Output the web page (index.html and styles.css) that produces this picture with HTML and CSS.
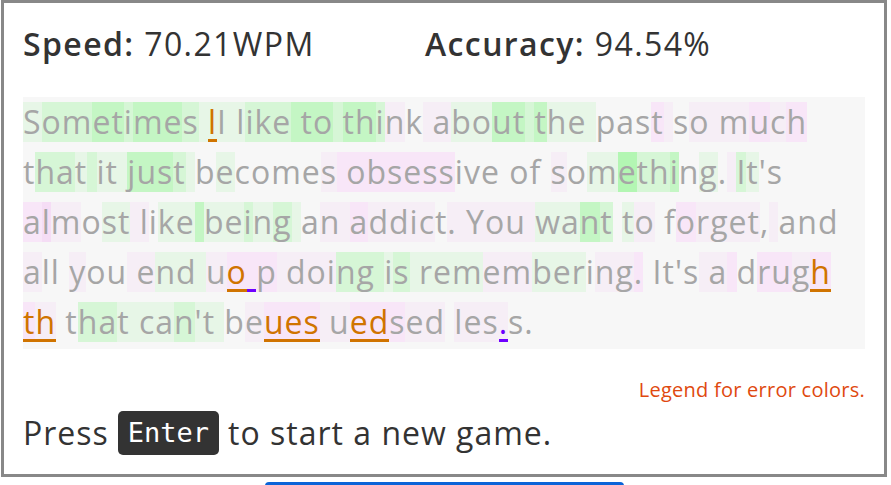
FILE: index.html
```html
<!DOCTYPE html>
<html lang="en">
<head>
<meta charset="utf-8">
<title>Typing game result</title>
<link rel="stylesheet" href="styles.css">
</head>
<body>
<div class="page">
  <div class="card">
    <div class="stats">
      <div class="stat"><b>Speed:</b> 70.21WPM</div>
      <div class="stat"><b>Accuracy:</b> 94.54%</div>
    </div>
    <div class="text">
      <div class="line"><span class="g1">S</span><span class="g2">om</span><span class="g3">et</span><span class="g2">i</span><span class="g3">me</span><span class="g2">s</span><span class="g1"> </span><span class="g1 e">l</span><span class="g1">I l</span><span class="g2">ike</span><span class="g3"> to</span><span class="g2"> </span><span class="g3">th</span><span class="g2">i</span><span class="p1">n</span><span>k</span><span class="p1"> a</span><span class="g1">bo</span><span class="g3">ut</span><span class="g2"> </span><span class="g3">t</span><span class="g1">he </span><span>pas</span><span class="p2">t</span><span class="p1"> </span><span>s</span><span class="p1">o m</span><span class="p2">u</span><span class="p1">c</span><span class="p2">h</span></div>
      <div class="line"><span>t</span><span class="g2">ha</span><span class="g1">t</span><span class="g2"> </span><span class="g1">it </span><span class="g3">jus</span><span class="g2">t</span><span class="g1"> </span><span>b</span><span class="g1">e</span><span>come</span><span class="p1">s</span><span class="p2"> obsess</span><span>ive of </span><span class="p1">s</span><span>o</span><span class="g1">m</span><span class="g4">e</span><span class="g2">th</span><span class="g3">i</span><span>n</span><span class="g1">g</span><span>.</span><span class="p1"> </span><span class="g2">I</span><span class="g1">t</span><span>'s</span></div>
      <div class="line"><span class="p2">a</span><span class="p3">l</span><span class="p1">m</span><span>o</span><span class="g1">st</span><span class="p1"> l</span><span>i</span><span class="g1">ke</span><span class="g3"> </span><span class="g1">be</span><span class="g2">i</span><span class="g1">n</span><span class="g2">g</span><span class="g1"> </span><span>a</span><span class="p1">n </span><span class="p2">a</span><span class="p1">ddic</span><span>t</span><span class="p1">. You </span><span class="g1">wa</span><span class="g3">n</span><span class="g2">t</span><span> </span><span class="g1">t</span><span class="p1">o</span><span> f</span><span class="p2">o</span><span class="p1">rget</span><span>,</span><span class="p1"> </span><span>and</span></div>
      <div class="line"><span class="p1">a</span><span>ll </span><span class="p1">y</span><span>ou</span><span class="p1"> e</span><span class="g1">nd </span><span class="p1">u</span><span class="p2 e">o</span><span class="p2 x"> </span><span class="p2">p</span><span class="p1"> doi</span><span class="g2">ng </span><span class="g1">i</span><span class="g2">s</span><span class="g1"> rem</span><span class="p1">em</span><span class="g1">ber</span><span>i</span><span class="p1">ng</span><span class="p2">.</span><span> It's</span><span class="p1"> a</span><span class="p2"> </span><span>d</span><span class="p2">ru</span><span class="p1">g</span><span class="p2 e">h</span></div>
      <div class="line"><span class="p2 e">t</span><span class="p1 e">h</span><span> t</span><span class="g2">ha</span><span class="g1">t </span><span class="g1">ca</span><span class="g2">n</span><span class="g1">'t </span><span>b</span><span class="p1">e</span><span class="p2 e">ues</span><span class="p1"> u</span><span class="p2 e">ed</span><span class="p2">s</span><span class="p1">ed</span><span> </span><span class="p1">les</span><span class="p1 x">.</span><span>s.</span></div>
    </div>
    <div class="legend">Legend for error colors.</div>
    <div class="press"><span>Press</span><kbd class="key">Enter</kbd><span>to start a new game.</span></div>
  </div>
  <div class="next-row"><div class="next-button"></div></div>
</div>
</body>
</html>
```
FILE: styles.css
```css
html, body {
  margin: 0;
  padding: 0;
  background: #ffffff;
}
body {
  font-family: "Open Sans", "Noto Sans", sans-serif;
  color: #333333;
  overflow: hidden;
}
.page {
  width: 886px;
  margin-left: 1px;
}
.card {
  box-sizing: border-box;
  width: 886px;
  border: 3px solid #888888;
  padding: 21px 19px 16px 19px;
}
.stats {
  display: grid;
  grid-template-columns: 402px auto;
  font-size: 32px;
  letter-spacing: 1.4px;
  line-height: 40px;
  height: 40px;
  margin-bottom: 33px;
  color: #333333;
}
.stat b {
  font-weight: 600;
}
.text {
  background: #f7f7f7;
  padding-bottom: 2px;
  font-size: 32px;
  letter-spacing: 1px;
  color: #a6a6a6;
}
.line {
  display: flex;
  align-items: center;
  height: 50px;
  white-space: pre;
}
.line span {
  line-height: 40px;
  height: 40px;
}
.g1 { background: #e7f6e7; }
.g2 { background: #d6f6d6; }
.g3 { background: #c4f6c4; }
.g4 { background: #b3f6b3; }
.p1 { background: #f6eef6; }
.p2 { background: #f8e6f8; }
.p3 { background: #f5ddf5; }
.line .e {
  color: #d07400;
  box-shadow: inset 0 -3px 0 #d07400;
}
.line .x {
  color: #6f00ff;
  box-shadow: inset 0 -3px 0 #6f00ff;
}
.legend {
  margin-top: 29px;
  text-align: right;
  font-size: 20px;
  letter-spacing: 0.25px;
  line-height: 24px;
  color: #e0490f;
}
.press {
  margin-top: 6px;
  display: flex;
  align-items: center;
  gap: 9px;
  height: 50px;
  font-size: 32px;
  letter-spacing: 1px;
  line-height: 50px;
  color: #333333;
}
.key {
  display: block;
  height: 44px;
  line-height: 44px;
  padding: 0 10px;
  background: #333333;
  color: #ffffff;
  border-radius: 5px;
  font-family: "DejaVu Sans Mono", monospace;
  font-size: 27px;
  letter-spacing: 0;
}
.next-row {
  display: flex;
  justify-content: center;
  padding-top: 5px;
}
.next-button {
  width: 359px;
  height: 20px;
  border-top: 3px solid #0a64d8;
  border-radius: 4px 4px 0 0;
}
```
